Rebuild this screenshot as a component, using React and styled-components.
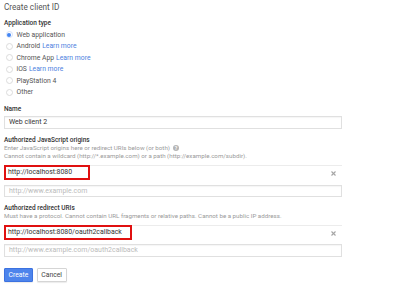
import styled, { createGlobalStyle } from "styled-components";

const Global = createGlobalStyle`
  body {
    margin: 0;
    background: #fff;
    font-family: Roboto, "Liberation Sans", Arial, sans-serif;
    color: #333;
  }
`;

const Page = styled.div`
  width: 400px;
  height: 298px;
  padding: 0 4px;
  box-sizing: border-box;
  overflow: hidden;
`;

const Title = styled.h1`
  margin: 0;
  padding-top: 1px;
  font-size: 8.2px;
  line-height: 12px;
  font-weight: 400;
  color: #555;
`;

const Label = styled.div`
  margin-top: ${(p) => p.$gap || 7}px;
  font-size: 6.5px;
  line-height: 8px;
  font-weight: 500;
  color: #333;
`;

const Form = styled.div`
  width: 338px;
`;

const RadioList = styled.div`
  margin-top: 2px;
  display: flex;
  flex-direction: column;
`;

const RadioRow = styled.label`
  height: 11.5px;
  display: flex;
  align-items: center;
  gap: 4px;
  font-size: 6.8px;
  color: #555;
`;

const Dot = styled.span`
  width: 7px;
  height: 7px;
  margin-left: 1.5px;
  border-radius: 50%;
  box-sizing: border-box;
  border: 1px solid ${(p) => (p.$on ? "#d3e0f8" : "#dcdcdc")};
  display: flex;
  align-items: center;
  justify-content: center;
  &::after {
    content: "";
    width: 4px;
    height: 4px;
    border-radius: 50%;
    background: ${(p) => (p.$on ? "#4285f4" : "transparent")};
  }
`;

const Link = styled.span`
  color: #4d7fe0;
  margin-left: 2px;
`;

const Input = styled.div`
  margin-top: ${(p) => p.$gap || 3}px;
  height: ${(p) => p.$h || 13}px;
  box-sizing: border-box;
  border: 1px solid #e0e0e0;
  box-shadow: inset 0 1px 1px rgba(0, 0, 0, 0.04);
  padding-left: 4px;
  display: flex;
  align-items: center;
  font-size: 7px;
  color: ${(p) => (p.$ph ? "#bbb" : "#333")};
`;

const Help = styled.div`
  font-size: 6.2px;
  line-height: 8.4px;
  color: #9a9a9a;
  display: flex;
  align-items: center;
  gap: 3px;
  white-space: nowrap;
`;

const Q = styled.span`
  width: 6px;
  height: 6px;
  border-radius: 50%;
  background: #b5b5b5;
  color: #fff;
  font-size: 5px;
  font-weight: 700;
  line-height: 6px;
  text-align: center;
`;

const Entry = styled.div`
  margin-top: 4px;
  height: 15px;
  border-top: 1px solid #ececec;
  display: flex;
  align-items: center;
  justify-content: space-between;
`;

const Marked = styled.div`
  width: ${(p) => p.$w}px;
  height: 15px;
  margin-top: -2px;
  box-sizing: border-box;
  border: 2px solid #e01010;
  padding-left: 2px;
  display: flex;
  align-items: center;
  font-size: 6.9px;
  color: #333;
  white-space: nowrap;
`;

const Close = styled.svg`
  width: 5px;
  height: 5px;
  margin-right: 6px;
  stroke: #a5a5a5;
  stroke-width: 1.1;
`;

const Buttons = styled.div`
  margin-top: 11px;
  display: flex;
  gap: 4px;
`;

const Button = styled.button`
  height: 14px;
  padding: 0 3.5px;
  border-radius: 1px;
  font-family: inherit;
  font-size: 6.8px;
  border: 1px solid ${(p) => (p.$primary ? "#3c72e0" : "#d5d5d5")};
  background: ${(p) => (p.$primary ? "#4d84ec" : "#fff")};
  color: ${(p) => (p.$primary ? "#fff" : "#444")};
  box-shadow: 0 1px 1px rgba(0, 0, 0, 0.08);
`;

const X = () => (
  <Close viewBox="0 0 5 5">
    <line x1="0.5" y1="0.5" x2="4.5" y2="4.5" />
    <line x1="4.5" y1="0.5" x2="0.5" y2="4.5" />
  </Close>
);

const TYPES = [
  { name: "Web application", on: true },
  { name: "Android", link: true },
  { name: "Chrome App", link: true },
  { name: "iOS", link: true },
  { name: "PlayStation 4" },
  { name: "Other" },
];

export default function App() {
  return (
    <Page>
      <Global />
      <Title>Create client ID</Title>
      <Form>
        <Label $gap={6}>Application type</Label>
        <RadioList>
          {TYPES.map((t) => (
            <RadioRow key={t.name}>
              <Dot $on={t.on} />
              <span>
                {t.name}
                {t.link && <Link>Learn more</Link>}
              </span>
            </RadioRow>
          ))}
        </RadioList>

        <Label>Name</Label>
        <Input $gap={2.5} $h={13.5}>Web client 2</Input>

        <Label>Authorized JavaScript origins</Label>
        <Help>
          Enter JavaScript origins here or redirect URIs below (or both)
          <Q>?</Q>
        </Help>
        <Help>
          Cannot contain a wildcard (http://*.example.com) or a path
          (http://example.com/subdir).
        </Help>
        <Entry>
          <Marked $w={86}>http://localhost:8080</Marked>
          <X />
        </Entry>
        <Input $gap={4} $h={12.5} $ph>
          http://www.example.com
        </Input>

        <Label $gap={7}>Authorized redirect URIs</Label>
        <Help>
          Must have a protocol. Cannot contain URL fragments or relative paths.
          Cannot be a public IP address.
        </Help>
        <Entry>
          <Marked $w={128}>http://localhost:8080/oauth2callback</Marked>
          <X />
        </Entry>
        <Input $gap={3} $h={13} $ph>
          http://www.example.com/oauth2callback
        </Input>

        <Buttons>
          <Button $primary>Create</Button>
          <Button>Cancel</Button>
        </Buttons>
      </Form>
    </Page>
  );
}
